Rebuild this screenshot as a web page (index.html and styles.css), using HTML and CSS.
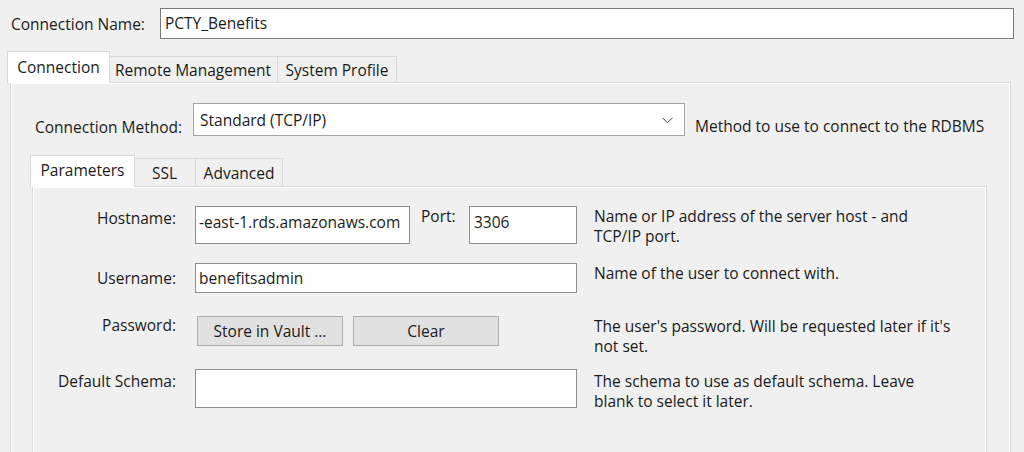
FILE: index.html
```html
<!DOCTYPE html>
<html>
<head>
<meta charset="utf-8">
<link rel="stylesheet" href="styles.css">
</head>
<body>
<div class="dialog">
  <div class="name-row">
    <span class="name-label">Connection Name:</span>
    <div class="textbox name-box">PCTY_Benefits</div>
  </div>

  <div class="tabs outer-tabs">
    <div class="tab tab-sel tab-connection">Connection</div>
    <div class="tab tab-remote">Remote Management</div>
    <div class="tab tab-profile">System Profile</div>
  </div>

  <div class="panel outer-panel">
    <div class="method-row">
      <span class="method-label">Connection Method:</span>
      <div class="dropdown">
        <span class="dropdown-text">Standard (TCP/IP)</span>
        <svg class="chevron" width="11" height="7" viewBox="0 0 11 7"><polyline points="0.5,0.8 5.5,5.8 10.5,0.8" fill="none" stroke="#444" stroke-width="1"/></svg>
      </div>
      <span class="method-desc">Method to use to connect to the RDBMS</span>
    </div>

    <div class="tabs inner-tabs">
      <div class="tab tab-sel tab-params">Parameters</div>
      <div class="tab tab-ssl">SSL</div>
      <div class="tab tab-adv">Advanced</div>
    </div>

    <div class="panel inner-panel">
      <div class="row row-host">
        <span class="field-label">Hostname:</span>
        <div class="textbox host-box">-east-1.rds.amazonaws.com</div>
        <span class="port-label">Port:</span>
        <div class="textbox port-box">3306</div>
        <span class="desc">Name or IP address of the server host - and<br>TCP/IP port.</span>
      </div>
      <div class="row row-user">
        <span class="field-label">Username:</span>
        <div class="textbox wide-box user-box">benefitsadmin</div>
        <span class="desc">Name of the user to connect with.</span>
      </div>
      <div class="row row-pass">
        <span class="field-label">Password:</span>
        <div class="buttons">
          <div class="button">Store in Vault ...</div>
          <div class="button">Clear</div>
        </div>
        <span class="desc">The user's password. Will be requested later if it's<br>not set.</span>
      </div>
      <div class="row row-schema">
        <span class="field-label">Default Schema:</span>
        <div class="textbox wide-box schema-box"></div>
        <span class="desc">The schema to use as default schema. Leave<br>blank to select it later.</span>
      </div>
    </div>
  </div>
</div>
</body>
</html>
```

FILE: styles.css
```css
html, body {
  margin: 0;
  padding: 0;
  background: #f0f0f0;
  width: 1024px;
  height: 452px;
  overflow: hidden;
}

.dialog {
  font-family: "Open Sans", "Noto Sans", sans-serif;
  font-size: 15.5px;
  line-height: 20px;
  color: #1b1b1b;
}

.textbox {
  box-sizing: border-box;
  background: #fff;
  border: 1px solid #8f8f8f;
  white-space: nowrap;
  overflow: hidden;
}

/* Connection name */
.name-row {
  display: flex;
  align-items: flex-start;
  padding: 8px 10px 0 11px;
}
.name-label {
  width: 149px;
  margin-top: 6px;
  white-space: nowrap;
}
.name-box {
  width: 854px;
  height: 31px;
  padding: 4px 4px;
  border-color: #7a7a7a;
}

/* Tabs */
.tabs {
  display: flex;
  align-items: flex-end;
}
.tab {
  box-sizing: border-box;
  height: 26px;
  border: 1px solid #d9d9d9;
  border-bottom: none;
  background: #f0f0f0;
  text-align: center;
  padding-top: 3px;
  white-space: nowrap;
}
.tab-sel {
  position: relative;
  z-index: 1;
  height: 32px;
  margin-bottom: -1px;
  background: #fff;
  padding-top: 5px;
}

.outer-tabs {
  margin-top: 12px;
  padding-left: 7px;
}
.tab-connection { width: 103px; margin-right: -2px; }
.tab-remote { width: 170px; }
.tab-profile { width: 120px; margin-left: -1px; }

.panel {
  box-sizing: border-box;
  border: 1px solid #d9d9d9;
  box-shadow: inset 1px 1px 0 #fff, inset -1px -1px 0 #fff;
  background: #f0f0f0;
}

.outer-panel {
  margin-left: 10px;
  width: 1001px;
  height: 400px;
  padding: 20px 0 0 24px;
}

/* Connection method */
.method-row {
  display: flex;
  align-items: flex-start;
}
.method-label {
  width: 158px;
  margin-top: 14px;
  white-space: nowrap;
}
.dropdown {
  box-sizing: border-box;
  width: 492px;
  height: 33px;
  background: #fff;
  border: 1px solid #a3a3a3;
  display: flex;
  align-items: center;
  justify-content: space-between;
  padding: 0 11px 0 6px;
}
.chevron { margin-top: 1px; }
.method-desc {
  margin-left: 10px;
  margin-top: 13px;
  white-space: nowrap;
}

.inner-tabs {
  margin-top: 18px;
  margin-left: -5px;
}
.tab-params { width: 105px; margin-right: -2px; height: 32px; }
.tab-ssl { width: 63px; height: 28px; }
.tab-adv { width: 88px; margin-left: -1px; height: 28px; }
.inner-tabs .tab { padding-top: 4px; }
.inner-tabs .tab-sel { padding-top: 4px; }

.inner-panel {
  margin-left: -3px;
  width: 955px;
  height: 300px;
  padding: 19px 0 0 0;
}

/* Parameter rows */
.row {
  display: flex;
  align-items: flex-start;
}
.field-label {
  width: 143px;
  margin-right: 19px;
  text-align: right;
  white-space: nowrap;
}
.desc {
  white-space: nowrap;
}

.row-host { height: 38px; }
.row-host .field-label { margin-top: 2px; }
.host-box {
  width: 215px;
  height: 38px;
  padding: 5px 3px 0;
}
.port-label {
  width: 48px;
  margin-left: 11px;
  margin-top: 0;
}
.port-box {
  width: 108px;
  height: 38px;
  padding: 5px 4px 0;
}
.row-host .desc { margin-left: 17px; }

.row-user { margin-top: 19px; height: 30px; }
.row-user .field-label { margin-top: 5px; }
.wide-box {
  width: 382px;
}
.user-box {
  height: 30px;
  padding: 4px 3px 0;
}
.row-user .desc { margin-left: 17px; }

.row-pass { margin-top: 23px; height: 30px; }
.row-pass .field-label { margin-top: -1px; }
.buttons {
  display: flex;
  gap: 10px;
  margin-left: 2px;
}
.button {
  box-sizing: border-box;
  width: 146px;
  height: 30px;
  background: #e1e1e1;
  border: 1px solid #adadad;
  text-align: center;
  padding-top: 4px;
}
.row-pass .desc { margin-left: 95px; }

.row-schema { margin-top: 23px; }
.row-schema .field-label { margin-top: 2px; }
.schema-box { height: 39px; }
.row-schema .desc { margin-left: 17px; margin-top: 2px; }
```
